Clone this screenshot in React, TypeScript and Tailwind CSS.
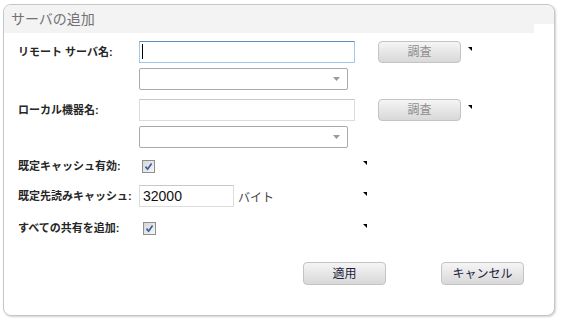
import React from 'react'

const Mark = () => (
  <svg width="4" height="4" viewBox="0 0 4 4" className="block self-start">
    <polygon points="0,0 4,0 4,4" fill="#000" />
  </svg>
)

const CheckBox = ({ className = '' }: { className?: string }) => (
  <span
    className={`flex h-[13px] w-[13px] items-center justify-center border border-[#8e8e8e] bg-linear-to-br from-[#d6d6d6] to-[#f6f6f6] ${className}`}
  >
    <svg width="9" height="9" viewBox="0 0 9 9">
      <path d="M1.5 4.6 L3.6 7.2 L7.6 1.4" stroke="#3a5ea6" strokeWidth="1.7" fill="none" />
    </svg>
  </span>
)

const Label = ({ children }: { children: React.ReactNode }) => (
  <div className="w-[121px] shrink-0 text-[11px] font-bold leading-none text-[#262626]">{children}</div>
)

const GrayButton = ({
  children,
  disabled,
  className = '',
}: {
  children: React.ReactNode
  disabled?: boolean
  className?: string
}) => (
  <button
    className={`flex h-[22px] w-[83px] items-center justify-center rounded-[4px] border border-[#c4c4c4] bg-linear-to-b from-[#f5f5f5] to-[#d8d8d8] text-[12px] leading-none ${
      disabled ? 'text-[#8f8f8f]' : 'text-[#1d1d3d]'
    } ${className}`}
  >
    {children}
  </button>
)

const SelectBox = () => (
  <div className="relative ml-[121px] h-[22px] w-[209px] rounded-[2px] border border-[#a9a9a9] bg-white">
    <svg width="7" height="4" viewBox="0 0 7 4" className="absolute right-[7px] top-[8px]">
      <polygon points="0,0 7,0 3.5,4" fill="#9a9a9a" />
    </svg>
  </div>
)

export default function App() {
  return (
    <div className="min-h-screen bg-white pl-[3px] pt-[4px] font-['Liberation_Sans','Noto_Sans_CJK_JP',sans-serif]">
      <div className="h-[312px] w-[552px] overflow-hidden rounded-[8px] border border-[#c6c6c6] bg-white shadow-[1px_1px_2px_rgba(0,0,0,0.18)]">
        <div className="relative flex h-[28px] items-center bg-[#f3f3f3] pl-[7px] text-[14px] leading-none text-[#727272]">
          サーバの追加
          <div className="absolute bottom-0 right-0 h-[9px] w-[20px] bg-white" />
        </div>

        <div className="pl-[14px]">
          <div className="mt-[8px] flex h-[22px] items-center">
            <Label>リモート サーバ名:</Label>
            <div className="relative h-[22px] w-[216px] border border-[#a3c8ea] border-t-[#5f8cb6] bg-white">
              <div className="absolute left-[2px] top-[2px] h-[15px] w-px bg-black" />
            </div>
            <GrayButton disabled className="ml-[23px]">調査</GrayButton>
            <div className="ml-[7px] mt-[6px] self-start">
              <Mark />
            </div>
          </div>

          <div className="mt-[5px]">
            <SelectBox />
          </div>

          <div className="mt-[9px] flex h-[22px] items-center">
            <Label>ローカル機器名:</Label>
            <div className="h-[22px] w-[216px] border border-[#dcdcdc] border-t-[#c8c8c8] bg-white" />
            <GrayButton disabled className="ml-[23px]">調査</GrayButton>
            <div className="ml-[7px] mt-[6px] self-start">
              <Mark />
            </div>
          </div>

          <div className="mt-[5px]">
            <SelectBox />
          </div>

          <div className="mt-[7px] flex h-[22px] items-center">
            <Label>既定キャッシュ有効:</Label>
            <div className="flex w-[224px] items-center">
              <CheckBox className="ml-[3px]" />
            </div>
            <div className="mt-[6px] self-start">
              <Mark />
            </div>
          </div>

          <div className="mt-[8px] flex h-[22px] items-center">
            <Label>既定先読みキャッシュ:</Label>
            <div className="flex w-[224px] items-center">
              <div className="flex h-[22px] w-[95px] items-center border border-[#dcdcdc] border-t-[#c8c8c8] bg-white pl-[3px] text-[14px] leading-none text-[#111]">
                32000
              </div>
              <span className="ml-[4px] mt-[4px] text-[12px] leading-none text-[#444]">バイト</span>
            </div>
            <div className="mt-[7px] self-start">
              <Mark />
            </div>
          </div>

          <div className="mt-[10px] flex h-[22px] items-center">
            <Label>すべての共有を追加:</Label>
            <div className="flex w-[224px] items-center">
              <CheckBox className="ml-[4px]" />
            </div>
            <div className="mt-[7px] self-start">
              <Mark />
            </div>
          </div>

          <div className="ml-[285px] mt-[23px] flex gap-[55px]">
            <GrayButton className="h-[23px]">適用</GrayButton>
            <GrayButton className="h-[23px]">キャンセル</GrayButton>
          </div>
        </div>
      </div>
    </div>
  )
}
